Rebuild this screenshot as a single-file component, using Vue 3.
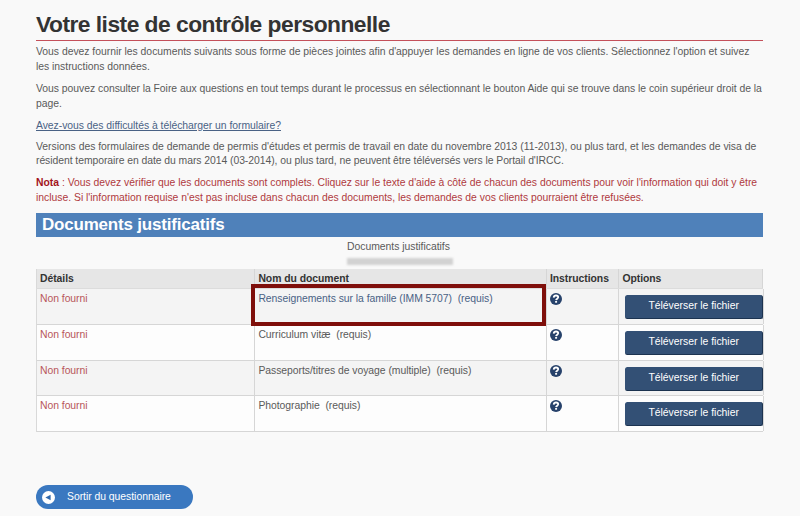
<script setup>
// Personal document checklist: intro copy, the table of supporting documents, exit button.
const documents = [
  { id: 1, name: 'Renseignements sur la famille (IMM 5707)', link: true },
  { id: 2, name: 'Curriculum vitæ' },
  { id: 3, name: 'Passeports/titres de voyage (multiple)' },
  { id: 4, name: 'Photographie' },
]
</script>

<template>
  <main class="page">
    <h1>Votre liste de contrôle personnelle</h1>

    <p>Vous devez fournir les documents suivants sous forme de pièces jointes afin d'appuyer les demandes en ligne de vos clients. Sélectionnez l'option et suivez<br>les instructions données.</p>
    <p class="tight">Vous pouvez consulter la Foire aux questions en tout temps durant le processus en sélectionnant le bouton Aide qui se trouve dans le coin supérieur droit de la<br>page.</p>
    <p class="more tight"><a href="#" @click.prevent>Avez-vous des difficultés à télécharger un formulaire?</a></p>
    <p class="versions">Versions des formulaires de demande de permis d'études et permis de travail en date du novembre 2013 (11-2013), ou plus tard, et les demandes de visa de<br><span class="tighter">résident temporaire en date du mars 2014 (03-2014), ou plus tard, ne peuvent être téléversés vers le Portail d'IRCC.</span></p>
    <p class="nota"><b>Nota</b> : Vous devez vérifier que les documents sont complets. Cliquez sur le texte d'aide à côté de chacun des documents pour voir l'information qui doit y être<br>incluse. Si l'information requise n'est pas incluse dans chacun des documents, les demandes de vos clients pourraient être refusées.</p>

    <h2>Documents justificatifs</h2>

    <table>
      <caption>
        Documents justificatifs
        <span class="redacted" aria-hidden="true"></span>
      </caption>
      <thead>
        <tr>
          <th>Détails</th>
          <th>Nom du document</th>
          <th>Instructions</th>
          <th>Options</th>
        </tr>
      </thead>
      <tbody>
        <tr v-for="doc in documents" :key="doc.id">
          <td class="status">Non fourni</td>
          <td class="name" :class="{ link: doc.link }">
            {{ doc.name }}&nbsp; (requis)
            <span v-if="doc.link" class="highlight"></span>
          </td>
          <td class="help">
            <svg viewBox="0 0 12 12" width="12" height="12" role="img" aria-label="Aide">
              <circle cx="6" cy="6" r="6" fill="#27426b" />
              <path d="M3.7 4.6C3.9 3.1 4.8 2.5 6 2.5c1.4 0 2.2.8 2.2 1.8C8.2 5.7 6.2 5.6 6.1 7.1" fill="none" stroke="#fff" stroke-width="1.8" />
              <rect x="5.1" y="7.9" width="2" height="1.8" rx=".4" fill="#fff" />
            </svg>
          </td>
          <td class="options"><button class="upload">Téléverser le fichier</button></td>
        </tr>
      </tbody>
    </table>

    <button class="exit">
      <svg viewBox="0 0 13 13" width="13" height="13" aria-hidden="true">
        <circle cx="6.5" cy="6.5" r="6.5" fill="#fff" />
        <path d="M3.4 6.5 8.6 3.8v5.4z" fill="#2f68ad" />
      </svg>
      <span>Sortir du questionnaire</span>
    </button>
  </main>
</template>

<style>
body {
  margin: 0;
  background: #f9f9f9;
}
</style>

<style scoped>
.page {
  box-sizing: border-box;
  height: 516px;
  padding: 10px 37px 0 36px;
  overflow: hidden;
  background: #f9f9f9;
  color: #5a5a5a;
  font-family: "Liberation Sans", Arial, sans-serif;
  font-size: 10.4px;
  line-height: 14.6px;
}
h1 {
  height: 30px;
  margin: 0 0 4.4px;
  border-bottom: 1px solid #c4505a;
  color: #333;
  font-size: 22.8px;
  letter-spacing: -0.52px;
  line-height: 29px;
  white-space: nowrap;
}
p {
  margin: 0 0 7.4px;
  letter-spacing: -0.022px;
  white-space: nowrap;
}
.tight { letter-spacing: -0.034px; }
.tighter { letter-spacing: -0.058px; }
a { color: #4a6285; text-decoration: underline; }
.more { margin-bottom: 6.6px; }
.versions { letter-spacing: -0.012px; }
.nota { margin-bottom: 7px; color: #b03a40; letter-spacing: -0.016px; }
.nota b { color: #a3141c; }
h2 {
  box-sizing: border-box;
  height: 24px;
  margin: 0;
  padding-left: 6px;
  background: #4f81ba;
  color: #fff;
  font-size: 17px;
  letter-spacing: -0.2px;
  line-height: 23px;
}
table, thead, tbody, caption { display: block; }
caption {
  height: 32px;
  padding-left: 311px;
  letter-spacing: -0.02px;
  line-height: 20px;
  text-align: left;
}
.redacted {
  display: block;
  width: 106px;
  height: 7px;
  margin-top: 1px;
  background: #d2d2d2;
  filter: blur(1px);
}
tr {
  display: grid;
  grid-template-columns: 218px 291.5px 72.5px 1fr;
  box-sizing: border-box;
  height: 35.75px;
  border-left: 1px solid #d9d9d9;
  border-bottom: 1px solid #d6d6d6;
  background: #fdfdfd;
}
tbody tr:nth-child(odd) { background: #f4f4f4; }
thead tr {
  height: 20.5px;
  background: #e6e6e6;
  border-bottom-color: #dcdcdc;
}
th, td {
  position: relative;
  box-sizing: border-box;
  padding: 3px 0 0 3.4px;
  border-right: 1px solid #d6d6d6;
  letter-spacing: -0.04px;
  text-align: left;
  white-space: nowrap;
}
th:first-child, td:first-child { padding-left: 3px; }
th { color: #333; }
.status { color: #b8565a; }
.name.link { color: #4a6285; }
.highlight {
  position: absolute;
  z-index: 1;
  left: -4px;
  top: -5px;
  width: 295px;
  height: 42px;
  box-sizing: border-box;
  border: 4px solid #7f0f0b;
}
.help svg { display: block; margin-top: 1px; }
.options { padding: 6px 0 0 6.4px; }
button {
  border: 0;
  padding: 0;
  color: #fff;
  font: inherit;
}
.upload {
  display: block;
  box-sizing: border-box;
  width: 137.5px;
  height: 24px;
  border-bottom: 1px solid #1c3350;
  border-right: 1px solid #1c3350;
  border-radius: 2.5px;
  background: #335075;
  letter-spacing: -0.01px;
}
.exit {
  display: flex;
  align-items: center;
  gap: 12px;
  box-sizing: border-box;
  width: 157px;
  height: 24px;
  margin-top: 53px;
  padding-left: 6px;
  border-radius: 12px;
  background: #3a78c0;
  letter-spacing: -0.03px;
}
</style>
